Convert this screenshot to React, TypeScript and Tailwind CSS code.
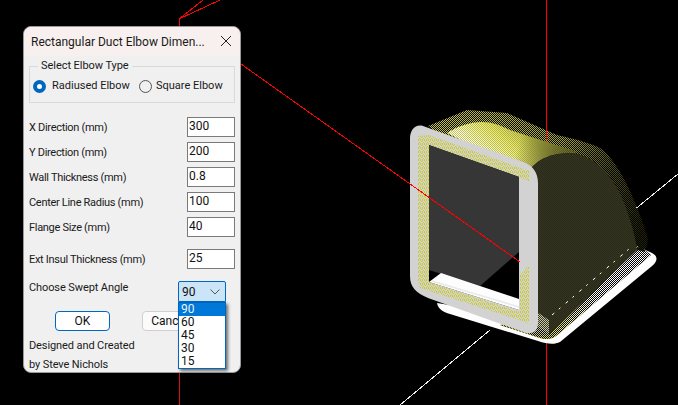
import React from "react";

const font = { fontFamily: '"Roboto", "Noto Sans", sans-serif' };

function Row({ label, value, className = "" }: { label: string; value: string; className?: string }) {
  return (
    <div className={`flex h-[20px] items-center justify-between ${className}`}>
      <span className="whitespace-nowrap pt-[2px] text-[11px] leading-[14px] tracking-[-0.3px] text-[#1a1a1a]">{label}</span>
      <input
        readOnly
        value={value}
        className="h-[20px] w-[48px] border border-[#7a7a7a] bg-white pb-[3px] pl-[1px] text-[12px] leading-[14px] text-[#111] outline-none"
      />
    </div>
  );
}

function Scene() {
  const topPath =
    "M447 133C458 126 470 122 482 122C492 122 500 125 510 130L577 152L570 153C552 153 540 158 530 169L500 160Z";
  const sidePath =
    "M530 169C540 158 552 153 570 153C596 155 615 178 625 205C631 222 635 235 637 250L550 334L537 326L530 200Z";
  const bandPath = "M640 246L651 255L556 336C552 339 546 340 540 338L500 325L540 320Z";
  return (
    <svg width="678" height="405" viewBox="0 0 678 405" className="block">
      <defs>
        <pattern id="chk" width="2" height="2" patternUnits="userSpaceOnUse">
          <rect width="1" height="1" fill="#fff" />
          <rect x="1" y="1" width="1" height="1" fill="#fff" />
        </pattern>
        <pattern id="chk4" width="4" height="4" patternUnits="userSpaceOnUse">
          <rect width="1" height="1" fill="#fff" />
          <rect x="2" width="1" height="1" fill="#fff" />
          <rect x="1" y="1" width="1" height="1" fill="#fff" />
          <rect x="3" y="2" width="1" height="1" fill="#fff" />
          <rect y="3" width="1" height="1" fill="#fff" />
          <rect x="2" y="3" width="1" height="1" fill="#fff" />
        </pattern>
        <mask id="m2" maskUnits="userSpaceOnUse" x="0" y="0" width="678" height="405">
          <rect width="678" height="405" fill="url(#chk)" />
        </mask>
        <mask id="m4" maskUnits="userSpaceOnUse" x="0" y="0" width="678" height="405">
          <rect width="678" height="405" fill="url(#chk4)" />
        </mask>
        <linearGradient id="halo" gradientUnits="userSpaceOnUse" x1="440" y1="115" x2="640" y2="235">
          <stop offset="0" stopColor="#c8c838" />
          <stop offset="0.5" stopColor="#a8a830" />
          <stop offset="0.75" stopColor="#505018" />
          <stop offset="1" stopColor="#242408" />
        </linearGradient>
        <linearGradient id="top" gradientUnits="userSpaceOnUse" x1="480" y1="150" x2="505" y2="118">
          <stop offset="0" stopColor="#ffffd0" />
          <stop offset="0.55" stopColor="#eeee70" />
          <stop offset="1" stopColor="#c8c850" />
        </linearGradient>
        <linearGradient id="topFade" gradientUnits="userSpaceOnUse" x1="520" y1="140" x2="578" y2="160">
          <stop offset="0" stopColor="#000" stopOpacity="0" />
          <stop offset="1" stopColor="#3a3a20" stopOpacity="1" />
        </linearGradient>
        <linearGradient id="band" gradientUnits="userSpaceOnUse" x1="530" y1="335" x2="600" y2="300">
          <stop offset="0" stopColor="#d8d820" />
          <stop offset="1" stopColor="#ffffff" />
        </linearGradient>
      </defs>

      {/* axes behind the dialog and the duct */}
      <g shapeRendering="crispEdges">
        <rect x="546" y="0" width="1" height="405" fill="#ff0000" />
        <rect x="179" y="19" width="1" height="386" fill="#e01010" />
        <path d="M179 19L203 0M179 19L220 0" stroke="#ff0000" strokeWidth="1" fill="none" />
        <path d="M636.5 208L678 174M490 330L400 405" stroke="#f0f0f0" strokeWidth="1" fill="none" />
      </g>

      {/* white plate */}
      <path
        d="M437 303C438 309 443 312 450 314L538 341C547 344 554 345 560 342L652 266C658 261 658 256 652 253L630 243L540 320Z"
        fill="#fdfdfd"
      />
      <path d={bandPath} fill="#000" />
      <path d={bandPath} fill="url(#band)" mask="url(#m2)" />

      {/* halo */}
      <path
        d="M428 126L467 110L507 113L557 135C578 140 595 144 603 150C622 167 640 210 648 240L645 252L600 240L537 180L440 135Z"
        fill="url(#halo)"
        mask="url(#m2)"
      />

      {/* top surface */}
      <path d={topPath} fill="url(#top)" />
      <path d={topPath} fill="url(#topFade)" />
      <path d={topPath} fill="#8a8a30" fillOpacity="0.55" mask="url(#m2)" />

      {/* side */}
      <path d={sidePath} fill="#343428" />
      <path d={sidePath} fill="#2a2a12" mask="url(#m2)" />
      <path d="M552 315L629 249" stroke="#ffffff" strokeWidth="1" strokeDasharray="3 6 2 7" fill="none" />
      <path d="M537 312L549 320L549 335L530 335Z" fill="#c8c8a0" mask="url(#m2)" />

      {/* frame */}
      <path
        d="M423 126L523 162C532 165 538 172 538 183L538 322C538 331 534 334 526 333L428 298C416 293 410 287 410 276L410 139C410 130 415 124 423 126Z"
        fill="#d2d2d2"
      />
      <path
        d="M418 136L429 135L529 171L529 181L429 145L429 282L520 312L520 275L529 265L529 323L420 288L418 280Z"
        fill="#cccc28"
        mask="url(#m4)"
      />

      {/* opening */}
      <path d="M429 145L519 177L519 310L429 282Z" fill="#000" />
      <path d="M429 145L519 177L519 252L480 286L429 270Z" fill="#363636" />
      <path d="M429 282L441 273L519 299L519 310Z" fill="#fdfdfd" />
      <path d="M432 281L519 307" stroke="#e8e8e8" strokeWidth="1.5" fill="none" />

      {/* red axis above everything it crosses */}
      <path d="M241 64L520 262" stroke="#ff0000" strokeWidth="1" fill="none" shapeRendering="crispEdges" />
      <rect x="546" y="110" width="1" height="30" fill="#ff0000" shapeRendering="crispEdges" />
    </svg>
  );
}

export default function App() {
  return (
    <div className="relative h-[405px] w-[678px] overflow-hidden bg-black" style={font}>
      <Scene />

      <div className="absolute left-[23px] top-[26px] flex h-[347px] w-[218px] flex-col rounded-[8px] border border-[#9a9a9a] bg-[#f0f0f0]">
        <div className="flex h-[29px] shrink-0 items-center justify-between rounded-t-[8px] bg-[#f8f0ee] pl-[7px] pr-[8px]">
          <span className="whitespace-nowrap text-[12px] leading-[16px] text-[#1a1a1a]">
            Rectangular Duct Elbow Dimen...
          </span>
          <svg width="12" height="12" viewBox="0 0 12 12" className="mb-[2px] block">
            <path d="M1 1L11 11M11 1L1 11" stroke="#222" strokeWidth="1" />
          </svg>
        </div>

        <div className="flex flex-col px-[5px]">
          <fieldset className="mt-[3px] h-[44px] border border-[#d9d9d9] px-[3px]">
            <legend className="ml-[5px] whitespace-nowrap px-[3px] text-[11px] leading-[14px] tracking-[-0.05px] text-[#1a1a1a]">
              Select Elbow Type
            </legend>
            <div className="mt-[6px] flex items-center whitespace-nowrap">
              <span className="flex h-[13px] w-[13px] items-center justify-center rounded-full bg-[#0067c0]">
                <span className="h-[5px] w-[5px] rounded-full bg-white" />
              </span>
              <span className="ml-[6px] w-[82px] text-[11px] leading-[14px] text-[#1a1a1a]">Radiused Elbow</span>
              <span className="ml-[5px] h-[13px] w-[13px] rounded-full border border-[#555]" />
              <span className="ml-[4px] text-[11px] leading-[14px] text-[#1a1a1a]">Square Elbow</span>
            </div>
          </fieldset>

          <div className="mt-[14px] flex flex-col gap-[5px]">
            <Row label="X Direction (mm)" value="300" />
            <Row label="Y Direction (mm)" value="200" />
            <Row label="Wall Thickness (mm)" value="0.8" />
            <Row label="Center Line Radius (mm)" value="100" />
            <Row label="Flange Size (mm)" value="40" />
            <Row label="Ext Insul Thickness (mm)" value="25" className="mt-[7px]" />
          </div>

          <div className="relative mr-[9px] mt-[12px] flex h-[21px] items-start justify-between">
            <span className="text-[11px] leading-[14px] tracking-[-0.1px] text-[#1a1a1a]">Choose Swept Angle</span>
            <div className="flex h-[21px] w-[48px] items-center justify-between rounded-t-[2px] border border-[#0067c0] bg-[#cce4f7] pl-[3px] pr-[5px] text-[12px] text-[#111]">
              <span>90</span>
              <svg width="10" height="6" viewBox="0 0 10 6" className="block">
                <path d="M0.5 0.5L5 5L9.5 0.5" stroke="#555" strokeWidth="1" fill="none" />
              </svg>
            </div>
            <div className="absolute left-[149px] top-[21px] z-10 w-[48px] border border-[#0067c0] bg-white text-[12px] leading-[13px] text-[#111] shadow-[2px_2px_3px_rgba(0,0,0,0.55)]">
              <div className="h-[13px] bg-[#0078d7] pl-[2px] text-[#e8f2fb]">90</div>
              <div className="h-[13px] pl-[2px]">60</div>
              <div className="h-[13px] pl-[2px]">45</div>
              <div className="h-[13px] pl-[2px]">30</div>
              <div className="h-[13px] pl-[2px]">15</div>
            </div>
          </div>

          <div className="ml-[26px] mt-[9px] flex gap-[32px]">
            <div className="flex h-[20px] w-[55px] items-center justify-center rounded-[4px] border border-[#0067c0] bg-white text-[12px] text-[#111]">
              OK
            </div>
            <div className="flex h-[20px] w-[55px] items-center justify-center rounded-[4px] border border-[#d0d0d0] bg-[#fbfbfb] text-[12px] text-[#111]">
              Cancel
            </div>
          </div>

          <div className="mt-[8px] text-[11px] leading-[14px] tracking-[-0.1px] text-[#1a1a1a]">Designed and Created</div>
          <div className="mt-[5px] text-[11px] leading-[14px] tracking-[-0.1px] text-[#1a1a1a]">by Steve Nichols</div>
        </div>
      </div>
    </div>
  );
}
